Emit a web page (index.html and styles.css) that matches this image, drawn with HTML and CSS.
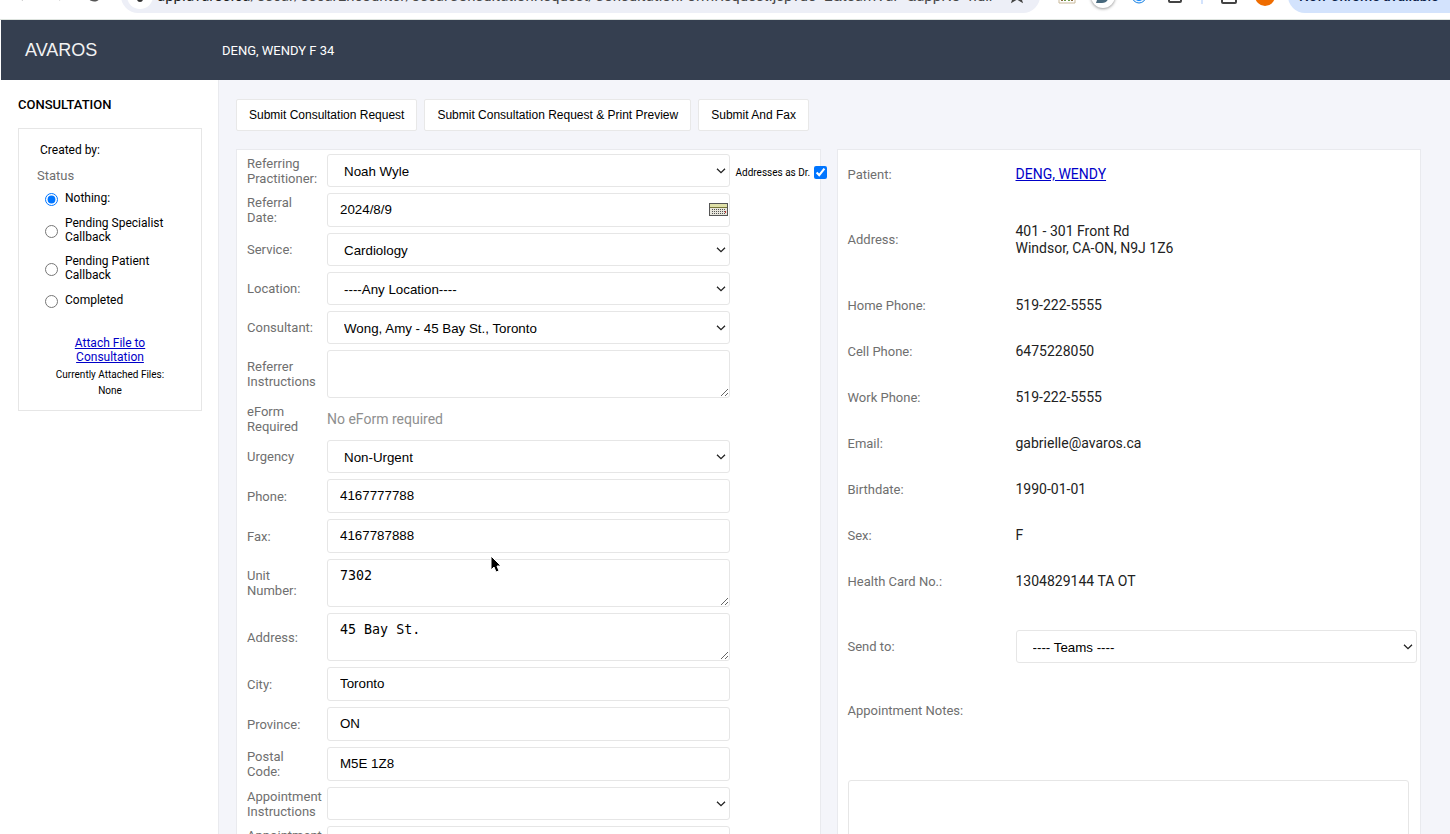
FILE: index.html
```html
<!DOCTYPE html>
<html lang="en">
<head>
    <meta charset="UTF-8">
    <meta name="viewport" content="width=device-width, initial-scale=1.0">
    <title>Consultation Request</title>
    <link rel="stylesheet" href="styles.css">
</head>
<body>
    <!-- Browser toolbar -->
    <div class="browser">
        <div class="toolbar">
            <div class="nav-icons">
                <svg width="20" height="20" viewBox="0 0 20 20" fill="none" stroke="#999" stroke-width="2"><path d="M16 9H5M10 4L5 9l5 5"/></svg>
                <svg width="20" height="20" viewBox="0 0 20 20" fill="none" stroke="#bbb" stroke-width="2"><path d="M4 9h11M10 4l5 5-5 5"/></svg>
                <svg width="20" height="20" viewBox="0 0 20 20" fill="none" stroke="#555" stroke-width="2"><path d="M14 5a6 6 0 1 0 1 5M15 2v4h-4"/></svg>
            </div>
            <div class="address-bar">
                <span class="site-info">
                    <svg width="16" height="16" viewBox="0 0 16 16" fill="none" stroke="#333" stroke-width="2"><path d="M1 4h6M11 11h4"/><circle cx="11" cy="4" r="2"/><circle cx="8" cy="11" r="2"/></svg>
                </span>
                <span class="url"><b>app.avaros.ca</b>/oscar/oscarEncounter/oscarConsultationRequest/ConsultationFormRequest.jsp?de=2&amp;teamVar=&amp;appNo=null</span>
                <svg class="star" width="18" height="18" viewBox="0 0 18 18" fill="none" stroke="#444" stroke-width="2"><path d="M9 1l2 5 5 .5-4 3.500 1.300 4L9 11.500 4.700 14 6 10 2 6.500 7 6z"/></svg>
            </div>
            <div class="extensions">
                <svg width="20" height="20" viewBox="0 0 20 20"><path d="M2 2h16v15H2z" fill="#fff" stroke="#c9b99a"/><path d="M5 6v9M15 6v9" stroke="#8a6a3a" stroke-width="2"/><path d="M8 6v9M12 6v9" stroke="#6a9a4a" stroke-width="2"/></svg>
                <span class="ext-d"><svg width="16" height="16" viewBox="0 0 16 16"><path d="M5 1h3q7 0 6 7-1 7-7 7H1l1-3h3z" fill="#47687c"/><path d="M7 5h2v7H7z" fill="#b8dce6"/></svg></span>
                <svg width="20" height="20" viewBox="0 0 20 20"><circle cx="10" cy="10" r="7" fill="#e8f4ff" stroke="#1b82e2"/><circle cx="10" cy="10" r="5" fill="#0a84ff"/></svg>
                <svg width="20" height="20" viewBox="0 0 20 20" fill="none" stroke="#444" stroke-width="2"><rect x="4" y="3" width="12" height="13" rx="1"/></svg>
                <span class="divider"></span>
                <svg width="20" height="20" viewBox="0 0 20 20" fill="none" stroke="#444" stroke-width="2"><rect x="3" y="3" width="14" height="14" rx="1"/></svg>
                <span class="avatar"></span>
            </div>
            <button type="button" class="update">New Chrome available <b>⋮</b></button>
        </div>
    </div>

    <header class="header">
        <span class="logo">AVAROS</span>
        <span class="patient-name">DENG, WENDY F 34</span>
    </header>

    <div class="page">
        <aside class="sidebar">
            <h1>CONSULTATION</h1>
            <div class="status-box">
                <p class="created">Created by:</p>
                <fieldset class="statuses">
                    <legend>Status</legend>
                    <label><input type="radio" name="status" checked><span>Nothing:</span></label>
                    <label><input type="radio" name="status"><span>Pending Specialist Callback</span></label>
                    <label><input type="radio" name="status"><span>Pending Patient Callback</span></label>
                    <label><input type="radio" name="status"><span>Completed</span></label>
                </fieldset>
                <div class="attach">
                    <a href="#">Attach File to Consultation</a>
                    <p>Currently Attached Files:</p>
                    <p>None</p>
                </div>
            </div>
        </aside>

        <main class="main">
            <div class="actions">
                <button type="button">Submit Consultation Request</button>
                <button type="button">Submit Consultation Request &amp; Print Preview</button>
                <button type="button">Submit And Fax</button>
            </div>

            <div class="cards">
                <form class="card request">
                    <div class="row">
                        <label for="practitioner">Referring Practitioner:</label>
                        <select id="practitioner"><option>Noah Wyle</option></select>
                        <label class="as-dr">Addresses as Dr. <input type="checkbox" checked></label>
                    </div>
                    <div class="row">
                        <label for="date">Referral<br>Date:</label>
                        <div class="date-field">
                            <input type="text" id="date" value="2024/8/9">
                            <button type="button" class="calendar" aria-label="Pick a date">
                                <svg width="19" height="13" viewBox="0 0 19 13">
                                    <rect x=".5" y=".5" width="18" height="12" fill="#e8e6dc" stroke="#555"/>
                                    <path d="M1 1h17v3H1z" fill="#dfe0a8"/>
                                    <path d="M1 4.500h17" stroke="#77773a"/>
                                    <path d="M3 6.500h13M3 8.500h13M3 10.500h13" stroke="#555" stroke-dasharray="1 1"/>
                                    <path d="M16 8h1v2h-1z" fill="#c33"/>
                                </svg>
                            </button>
                        </div>
                    </div>
                    <div class="row">
                        <label for="service">Service:</label>
                        <select id="service"><option>Cardiology</option></select>
                    </div>
                    <div class="row">
                        <label for="location">Location:</label>
                        <select id="location"><option>----Any Location----</option></select>
                    </div>
                    <div class="row">
                        <label for="consultant">Consultant:</label>
                        <select id="consultant"><option>Wong, Amy - 45 Bay St., Toronto</option></select>
                    </div>
                    <div class="row">
                        <label for="instructions">Referrer Instructions</label>
                        <textarea id="instructions"></textarea>
                    </div>
                    <div class="row">
                        <span class="label">eForm Required</span>
                        <span class="no-eform">No eForm required</span>
                    </div>
                    <div class="row">
                        <label for="urgency">Urgency</label>
                        <select id="urgency"><option>Non-Urgent</option></select>
                    </div>
                    <div class="row">
                        <label for="phone">Phone:</label>
                        <input type="text" id="phone" value="4167777788">
                    </div>
                    <div class="row">
                        <label for="fax">Fax:</label>
                        <input type="text" id="fax" value="4167787888">
                    </div>
                    <div class="row">
                        <label for="unit">Unit<br>Number:</label>
                        <textarea id="unit">7302</textarea>
                    </div>
                    <div class="row">
                        <label for="address">Address:</label>
                        <textarea id="address">45 Bay St.</textarea>
                    </div>
                    <div class="row">
                        <label for="city">City:</label>
                        <input type="text" id="city" value="Toronto">
                    </div>
                    <div class="row">
                        <label for="province">Province:</label>
                        <input type="text" id="province" value="ON">
                    </div>
                    <div class="row">
                        <label for="postal">Postal<br>Code:</label>
                        <input type="text" id="postal" value="M5E 1Z8">
                    </div>
                    <div class="row">
                        <label for="appt-instructions">Appointment Instructions</label>
                        <select id="appt-instructions"><option></option></select>
                    </div>
                    <div class="row">
                        <label for="appt-date">Appointment Date:</label>
                        <input type="text" id="appt-date">
                    </div>
                </form>

                <section class="card patient">
                    <dl>
                        <div><dt>Patient:</dt><dd><a href="#">DENG, WENDY</a></dd></div>
                        <div class="tall"><dt>Address:</dt><dd>401 - 301 Front Rd<br>Windsor, CA-ON, N9J 1Z6</dd></div>
                        <div><dt>Home Phone:</dt><dd>519-222-5555</dd></div>
                        <div><dt>Cell Phone:</dt><dd>6475228050</dd></div>
                        <div><dt>Work Phone:</dt><dd>519-222-5555</dd></div>
                        <div><dt>Email:</dt><dd>gabrielle@avaros.ca</dd></div>
                        <div><dt>Birthdate:</dt><dd>1990-01-01</dd></div>
                        <div><dt>Sex:</dt><dd>F</dd></div>
                        <div><dt>Health Card No.:</dt><dd>1304829144 TA OT</dd></div>
                        <div class="tall"><dt><label for="team">Send to:</label></dt><dd><select id="team"><option>---- Teams ----</option></select></dd></div>
                    </dl>
                    <div class="notes">
                        <label for="notes">Appointment Notes:</label>
                        <textarea id="notes"></textarea>
                    </div>
                </section>
            </div>
        </main>
    </div>

    <svg class="cursor" width="12" height="18" viewBox="0 0 12 18"><path d="M1 1v14l3-3 2 5 3-1-2-5h4z" fill="#000" stroke="#fff"/></svg>
</body>
</html>
```

FILE: styles.css
```css
* {
    box-sizing: border-box;
}

body {
    display: flex;
    flex-direction: column;
    height: 100vh;
    margin: 0;
    overflow: hidden;
    font-family: Roboto, sans-serif;
    font-size: 13px;
    color: #000;
    background-color: #fff;
}

p, dl, dd, h1 {
    margin: 0;
}

a {
    color: #0000c8;
}

/* Browser toolbar */
.browser {
    display: flex;
    align-items: flex-end;
    flex-shrink: 0;
    height: 20px;
    overflow: hidden;
    border-bottom: 1px solid #dde3de;
}

.toolbar {
    display: flex;
    align-items: center;
    flex: 1;
    min-width: 0;
    height: 46px;
}

.nav-icons {
    display: flex;
    gap: 16px;
    padding: 0 16px 0 13px;
}

.address-bar {
    display: flex;
    align-items: center;
    flex: 1;
    min-width: 0;
    height: 34px;
    padding: 0 14px 0 6px;
    border-radius: 17px;
    background-color: #edeff7;
}

.site-info {
    display: flex;
    align-items: center;
    justify-content: center;
    width: 26px;
    height: 26px;
    margin-right: 4px;
    border-radius: 50%;
    background-color: #fff;
}

.url {
    flex: 1;
    min-width: 0;
    white-space: nowrap;
    font-size: 15px;
    line-height: 20px;
    color: #474747;
}

.url b {
    font-weight: 400;
    color: #1f1f1f;
}

.extensions {
    display: flex;
    align-items: center;
    gap: 16px;
    padding: 0 13px 0 17px;
}

.ext-d {
    display: flex;
    align-items: center;
    justify-content: center;
    width: 24px;
    height: 24px;
    margin: 0 -2px;
    border-radius: 50%;
    background-color: #fff;
    box-shadow: 0 1px 3px #999;
}

.divider {
    width: 2px;
    height: 16px;
    background-color: #d3e3fd;
}

.avatar {
    width: 20px;
    height: 20px;
    border-radius: 50%;
    background-color: #ef6c00;
}

.update {
    height: 34px;
    width: 162px;
    padding: 0 0 0 11px;
    border: none;
    border-radius: 17px 0 0 17px;
    background-color: #d3e3fd;
    font-family: Roboto, sans-serif;
    font-size: 14px;
    font-weight: 500;
    text-align: left;
    white-space: nowrap;
    color: #0b1f4a;
}

.update b {
    margin-left: 4px;
}

/* Application header */
.header {
    display: flex;
    align-items: center;
    flex-shrink: 0;
    height: 60px;
    margin-left: 1px;
    padding-left: 24px;
    background-color: #353f50;
    color: #fff;
}

.logo {
    width: 197px;
    font-family: "Liberation Sans", Arial, sans-serif;
    font-size: 18px;
    color: #f2f2f2;
}

.page {
    display: flex;
    flex: 1;
    min-height: 0;
    margin-left: 1px;
}

/* Sidebar */
.sidebar {
    flex-shrink: 0;
    width: 218px;
    padding: 17px 16px 0 17px;
    border-right: 1px solid #e9eaee;
}

h1 {
    font-size: 13px;
    font-weight: 500;
    line-height: 16px;
}

.status-box {
    margin-top: 15px;
    padding: 14px 18px 12px;
    border: 1px solid #e6e6e6;
    font-size: 12px;
    line-height: 14px;
}

.created {
    padding-left: 3px;
}

.statuses {
    margin: 0;
    padding: 7px 0 0;
    border: none;
}

.statuses legend {
    padding: 12px 0 0;
    font-size: 13px;
    color: #6f6f6f;
}

.statuses label {
    display: flex;
    align-items: center;
    gap: 7px;
    margin: 0 9px 10px 8px;
}

.statuses input {
    flex-shrink: 0;
    width: 13px;
    height: 13px;
    margin: 3px 0 0;
}

.attach {
    padding-top: 18px;
    text-align: center;
}

.attach a {
    display: block;
    padding: 0 10px 2px;
}

.attach p {
    padding-top: 2px;
    font-size: 10px;
}

/* Main area */
.main {
    flex: 1;
    min-width: 0;
    padding: 19px 29px 0 17px;
    overflow: hidden;
    background-color: #f4f5fa;
}

.actions {
    display: flex;
    gap: 7px;
}

.actions button {
    height: 32px;
    padding: 0 12px;
    border: 1px solid #e8e8e8;
    border-radius: 2px;
    background-color: #fff;
    font-family: "Liberation Sans", Arial, sans-serif;
    font-size: 12px;
}

.cards {
    display: grid;
    grid-template-columns: 1fr 1fr;
    gap: 16px;
    margin-top: 18px;
}

.card {
    min-width: 0;
    border: 1px solid #e9eaee;
    background-color: #fff;
}

input[type="text"], select, textarea {
    display: block;
    width: 100%;
    margin: 0;
    border: 1px solid #e6e6e6;
    border-radius: 3px;
    background-color: #fff;
    color: #000;
}

input[type="text"], select {
    font-family: "Liberation Sans", Arial, sans-serif;
}

input[type="text"] {
    height: 34px;
    padding: 0 12px 2px;
}

select {
    height: 33px;
    padding: 2px 20px 0 16px;
    appearance: none;
    background-image: url("data:image/svg+xml,%3Csvg xmlns='http://www.w3.org/2000/svg' width='10' height='6' fill='none' stroke='%23222' stroke-width='1.3'%3E%3Cpath d='M1 .7l4 4 4-4'/%3E%3C/svg%3E");
    background-repeat: no-repeat;
    background-position: right 3px center;
}

textarea {
    height: 48px;
    padding: 8px 12px;
    font-family: "DejaVu Sans Mono", monospace;
}

.request {
    display: flex;
    flex-direction: column;
    gap: 6px;
    padding: 4px 0 4px 10px;
}

.row {
    display: grid;
    grid-template-columns: 80px 1fr 90px;
    align-items: center;
    line-height: 15px;
}

.row > label, .label, dt, .notes label {
    color: #6f6f6f;
}

.row > .as-dr {
    display: flex;
    align-items: center;
    gap: 4px;
    padding: 4px 0 0 6px;
    font-size: 10px;
    white-space: nowrap;
    color: #000;
}

.as-dr input {
    flex-shrink: 0;
    width: 13px;
    height: 13px;
    margin: 0;
}

.date-field {
    position: relative;
}

.calendar {
    position: absolute;
    top: 10px;
    right: 2px;
    padding: 0;
    border: none;
    background: none;
    line-height: 0;
}

.no-eform {
    font-size: 14px;
    color: #8f8f8f;
}

/* Patient details */
.patient {
    padding-top: 1px;
}

.patient dl > div {
    display: flex;
    align-items: center;
    height: 46px;
    padding: 0 3px 0 10px;
}

.patient dl > .tall {
    height: 85px;
}

dt {
    flex-shrink: 0;
    width: 168px;
}

dd {
    flex: 1;
    font-size: 14px;
    line-height: 17px;
    color: #222;
}

.notes {
    padding: 14px 11px 0 10px;
}

.notes textarea {
    height: 96px;
    margin-top: 62px;
}

/* Pointer over the form */
.cursor {
    position: absolute;
    top: 555px;
    left: 490px;
}
```
